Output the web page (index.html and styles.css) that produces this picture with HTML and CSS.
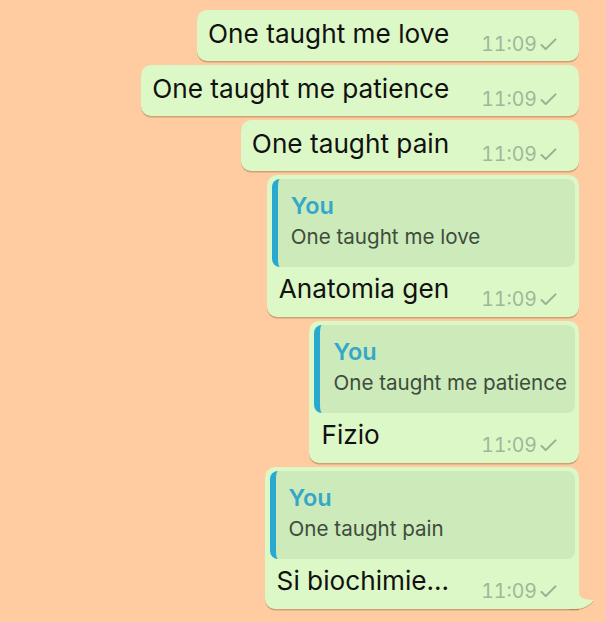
FILE: index.html
```html
<!DOCTYPE html>
<html>
<head>
<meta charset="utf-8">
<link rel="stylesheet" href="styles.css">
</head>
<body>
<div class="chat">
  <div class="bubble">
    <div class="row">
      <span class="text">One taught me love</span>
      <span class="meta">11:09<svg class="check" viewBox="0 0 18 14"><path d="M1.5 7.5 L6 12 L16.5 1.5"/></svg></span>
    </div>
  </div>
  <div class="bubble">
    <div class="row">
      <span class="text">One taught me patience</span>
      <span class="meta">11:09<svg class="check" viewBox="0 0 18 14"><path d="M1.5 7.5 L6 12 L16.5 1.5"/></svg></span>
    </div>
  </div>
  <div class="bubble">
    <div class="row">
      <span class="text">One taught pain</span>
      <span class="meta">11:09<svg class="check" viewBox="0 0 18 14"><path d="M1.5 7.5 L6 12 L16.5 1.5"/></svg></span>
    </div>
  </div>
  <div class="bubble quoted">
    <div class="quote">
      <div class="q-author">You</div>
      <div class="q-text">One taught me love</div>
    </div>
    <div class="row">
      <span class="text">Anatomia gen</span>
      <span class="meta">11:09<svg class="check" viewBox="0 0 18 14"><path d="M1.5 7.5 L6 12 L16.5 1.5"/></svg></span>
    </div>
  </div>
  <div class="bubble quoted">
    <div class="quote">
      <div class="q-author">You</div>
      <div class="q-text">One taught me patience</div>
    </div>
    <div class="row">
      <span class="text">Fizio</span>
      <span class="meta">11:09<svg class="check" viewBox="0 0 18 14"><path d="M1.5 7.5 L6 12 L16.5 1.5"/></svg></span>
    </div>
  </div>
  <div class="bubble quoted last">
    <div class="quote">
      <div class="q-author">You</div>
      <div class="q-text">One taught pain</div>
    </div>
    <div class="row">
      <span class="text">Si biochimie...</span>
      <span class="meta">11:09<svg class="check" viewBox="0 0 18 14"><path d="M1.5 7.5 L6 12 L16.5 1.5"/></svg></span>
    </div>
    <svg class="tail" viewBox="0 0 26 24"><path d="M0 0 H10 V7 C10 12 14 15 25 15 C20 21 14 24 6 24 H0 Z"/></svg>
  </div>
</div>
</body>
</html>
```

FILE: styles.css
```css
html, body {
  margin: 0;
  padding: 0;
}
body {
  background: #fecca0;
  font-family: Inter, "Noto Sans", "Liberation Sans", sans-serif;
  width: 605px;
  height: 622px;
  overflow: hidden;
}
.chat {
  display: flex;
  flex-direction: column;
  align-items: flex-end;
  gap: 4px;
  padding: 10px 26px 0 0;
}
.bubble {
  position: relative;
  background: #dcf8c6;
  border-radius: 10px;
  box-shadow: 0 1.5px 0.5px rgba(150, 110, 60, 0.45);
  padding: 9px 22px 6px 11px;
  display: flex;
  flex-direction: column;
}
.row {
  display: flex;
  align-items: flex-end;
  justify-content: space-between;
  gap: 32px;
}
.text {
  font-size: 26.2px;
  line-height: 30px;
  color: #111;
  padding-bottom: 6px;
  white-space: nowrap;
}
.meta {
  display: flex;
  align-items: center;
  gap: 3px;
  font-size: 19.5px;
  line-height: 22px;
  color: #9db89b;
  font-variant-numeric: tabular-nums;
  white-space: nowrap;
}
.check {
  width: 17px;
  height: 13px;
  fill: none;
  stroke: #95b293;
  stroke-width: 2.2;
  stroke-linecap: round;
  stroke-linejoin: round;
}
.quoted {
  padding: 4px 4px 7px 5px;
}
.quoted .row {
  padding: 7px 18px 0 7px;
}
.quote {
  background: #cdeabb;
  border-radius: 8px;
  border-left: 6px solid #29a9cf;
  padding: 11px 8px 14px 13px;
}
.q-author {
  font-size: 23.5px;
  line-height: 31px;
  font-weight: 600;
  color: #35a8c8;
}
.q-text {
  font-size: 20.6px;
  line-height: 32px;
  color: #3e4c3c;
  white-space: nowrap;
}
.last {
  border-bottom-right-radius: 0;
}
.tail {
  position: absolute;
  right: -16px;
  bottom: 0;
  width: 26px;
  height: 24px;
  fill: #dcf8c6;
  filter: drop-shadow(0 1.5px 0.5px rgba(150, 110, 60, 0.45));
}
```
